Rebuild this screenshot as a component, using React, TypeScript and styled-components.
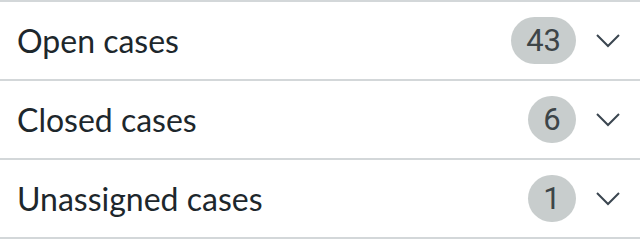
import styled, { createGlobalStyle } from 'styled-components';

const GlobalStyle = createGlobalStyle`
  html, body {
    margin: 0;
    padding: 0;
    background: #ffffff;
  }
`;

const List = styled.ul`
  list-style: none;
  margin: 0;
  padding: 0;
  width: 640px;
  border-top: 2px solid #d3d7d9;
`;

const Row = styled.li`
  display: flex;
  align-items: center;
  height: 77px;
  padding: 0 20px 0 17px;
  border-bottom: 2px solid #d3d7d9;
  box-sizing: content-box;
`;

const Label = styled.span`
  flex: 1;
  font-family: Lato, 'Liberation Sans', sans-serif;
  font-size: 32px;
  color: #1d272c;
`;

const Count = styled.span`
  display: inline-flex;
  align-items: center;
  justify-content: center;
  min-width: 48px;
  height: 47px;
  padding: 0 15px;
  box-sizing: border-box;
  border-radius: 24px;
  background: #c8cdcd;
  color: #3d4548;
  font-family: Roboto, 'Liberation Sans', sans-serif;
  font-size: 31px;
`;

const Toggle = styled.svg`
  margin-left: 20px;
  width: 24px;
  height: 14px;
  flex-shrink: 0;
`;

const Chevron = () => (
  <Toggle viewBox="0 0 24 14">
    <polyline points="1,1 12,12 23,1" fill="none" stroke="#3b4650" strokeWidth="2" />
  </Toggle>
);

const groups = [
  { label: 'Open cases', count: 43 },
  { label: 'Closed cases', count: 6 },
  { label: 'Unassigned cases', count: 1 },
];

export default function App() {
  return (
    <>
      <GlobalStyle />
      <List>
        {groups.map((g) => (
          <Row key={g.label}>
            <Label>{g.label}</Label>
            <Count>{g.count}</Count>
            <Chevron />
          </Row>
        ))}
      </List>
    </>
  );
}
